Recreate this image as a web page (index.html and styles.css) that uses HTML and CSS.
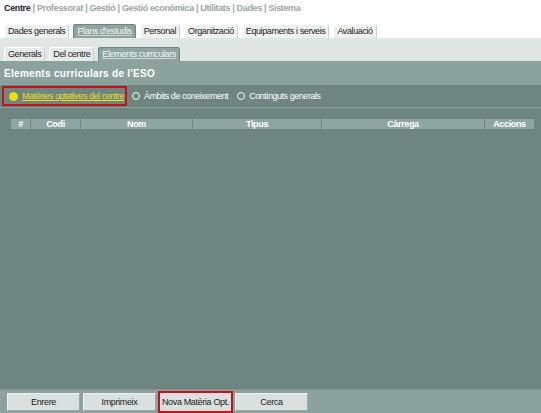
FILE: index.html
```html
<!DOCTYPE html>
<html lang="ca">
<head>
  <meta charset="UTF-8">
  <title>Elements curriculars</title>
  <link rel="stylesheet" href="styles.css">
</head>
<body>

  <div class="page">
    <div class="topnav">
      <b class="current">Centre</b> | Professorat | Gestió | Gestió econòmica | Utilitats | Dades | Sistema
    </div>

    <div class="tabs">
      <span class="tab">Dades generals</span>
      <span class="tab active">Plans d'estudis</span>
      <span class="tab">Personal</span>
      <span class="tab">Organització</span>
      <span class="tab">Equipaments i serveis</span>
      <span class="tab">Avaluació</span>
    </div>

    <div class="subband">
      <div class="tabs subtabs">
        <span class="tab">Generals</span>
        <span class="tab">Del centre</span>
        <span class="tab active">Elements curriculars</span>
      </div>
    </div>

    <h1 class="title">Elements curriculars de l'ESO</h1>

    <div class="main">
      <div class="options">
        <label class="opt selected"><span class="dot"></span><span class="opt-text">Matèries optatives del centre</span></label>
        <label class="opt"><span class="dot"></span><span class="opt-text">Àmbits de coneixement</span></label>
        <label class="opt"><span class="dot"></span><span class="opt-text">Continguts generals</span></label>
      </div>

      <table class="grid">
        <thead>
          <tr>
            <th class="c-num">#</th>
            <th class="c-codi">Codi</th>
            <th class="c-nom">Nom</th>
            <th class="c-tipus">Tipus</th>
            <th class="c-carrega">Càrrega</th>
            <th class="c-accions">Accions</th>
          </tr>
        </thead>
        <tbody></tbody>
      </table>
    </div>

    <div class="footer">
      <button class="btn">Enrere</button>
      <button class="btn">Imprimeix</button>
      <button class="btn marked">Nova Matèria Opt.</button>
      <button class="btn">Cerca</button>
    </div>
  </div>

</body>
</html>
```

FILE: styles.css
```css
body {
  margin: 0;
  background-color: #fff;
  font-family: 'Liberation Sans', Arial, sans-serif;
  font-size: 9px;
  letter-spacing: -0.35px;
  color: #222;
}

.page {
  display: flex;
  flex-direction: column;
  height: 413px;
}

.topnav {
  height: 18px;
  padding: 3px 4px 0;
  box-sizing: border-box;
  font-weight: bold;
  color: #97a6a2;
}

.topnav .current {
  color: #222;
}

.tabs {
  display: flex;
  gap: 4px;
  padding: 6px 4px 0;
  height: 20px;
  box-sizing: border-box;
  align-items: flex-end;
}

.tab {
  height: 14px;
  line-height: 14px;
  padding: 0 4px;
  background-color: #eef1f0;
  border-radius: 3px 3px 0 0;
  box-shadow: inset 1px 1px 0 #fff, inset -1px 0 0 #c9d1cf;
  letter-spacing: -0.4px;
  white-space: nowrap;
}

.subband {
  background-color: #dfe6e4;
  height: 23px;
}

.subtabs {
  height: 23px;
  padding-top: 9px;
}

.subtabs .tab {
  background-color: #e6ebea;
}

.tabs .tab.active {
  background-color: #8fa59f;
  color: #f4f7f6;
  box-shadow: inset 1px 1px 0 #6f8680, inset -1px 0 0 #6f8680;
  text-decoration: underline;
  text-decoration-color: #c8d6d2;
}

.title {
  margin: 0;
  height: 24px;
  line-height: 26px;
  padding: 0 4px;
  background-color: #8ca39d;
  color: #fff;
  font-size: 10px;
  font-weight: bold;
  letter-spacing: 0.3px;
}

.main {
  flex: 1;
  background-color: #6f8680;
}

.options {
  display: flex;
  align-items: center;
  height: 22px;
  padding: 0 0 0 2px;
  border-bottom: 1px solid #89a09a;
  color: #fff;
  letter-spacing: -0.45px;
}

.opt {
  display: flex;
  align-items: center;
  gap: 4px;
  height: 16px;
  padding: 0 2px 0 3px;
  border: 2px solid transparent;
}

.dot {
  width: 6px;
  height: 6px;
  border: 1px solid #fff;
  border-radius: 50%;
}

.opt.selected {
  padding-left: 5px;
  padding-right: 1px;
  border-color: #c8101a;
}

.opt.selected .dot {
  background-color: #f3dc10;
  border-color: #f3dc10;
  width: 7px;
  height: 7px;
}

.opt.selected .opt-text {
  color: #f3dc10;
  text-decoration: underline;
}

.grid {
  margin: 11px 6px 0 10px;
  width: 525px;
  border-collapse: separate;
  border-spacing: 1px 0;
}

.grid th {
  height: 10px;
  padding: 0;
  background-color: #8fa59f;
  color: #fff;
  font-weight: bold;
  font-size: 9px;
  line-height: 10px;
}

.c-num { width: 19px; }
.c-codi { width: 49px; }
.c-nom { width: 111px; }
.c-tipus { width: 128px; }
.c-carrega { width: 162px; }
.c-accions { width: 49px; }

.footer {
  height: 23px;
  display: flex;
  gap: 3px;
  align-items: center;
  padding: 0 7px;
  background-color: #8ca39d;
  border-top: 1px solid #7d948e;
}

.btn {
  width: 73px;
  height: 18px;
  padding: 0;
  background-color: #dae0de;
  border: 1px solid #eef2f1;
  border-right-color: #9aaaa6;
  border-bottom-color: #9aaaa6;
  font-family: inherit;
  font-size: 9px;
  letter-spacing: -0.35px;
  white-space: nowrap;
  color: #222;
}

.btn.marked {
  border: 2px solid #c8101a;
  width: 75px;
  height: 22px;
  margin: 0 -1px;
}
```
